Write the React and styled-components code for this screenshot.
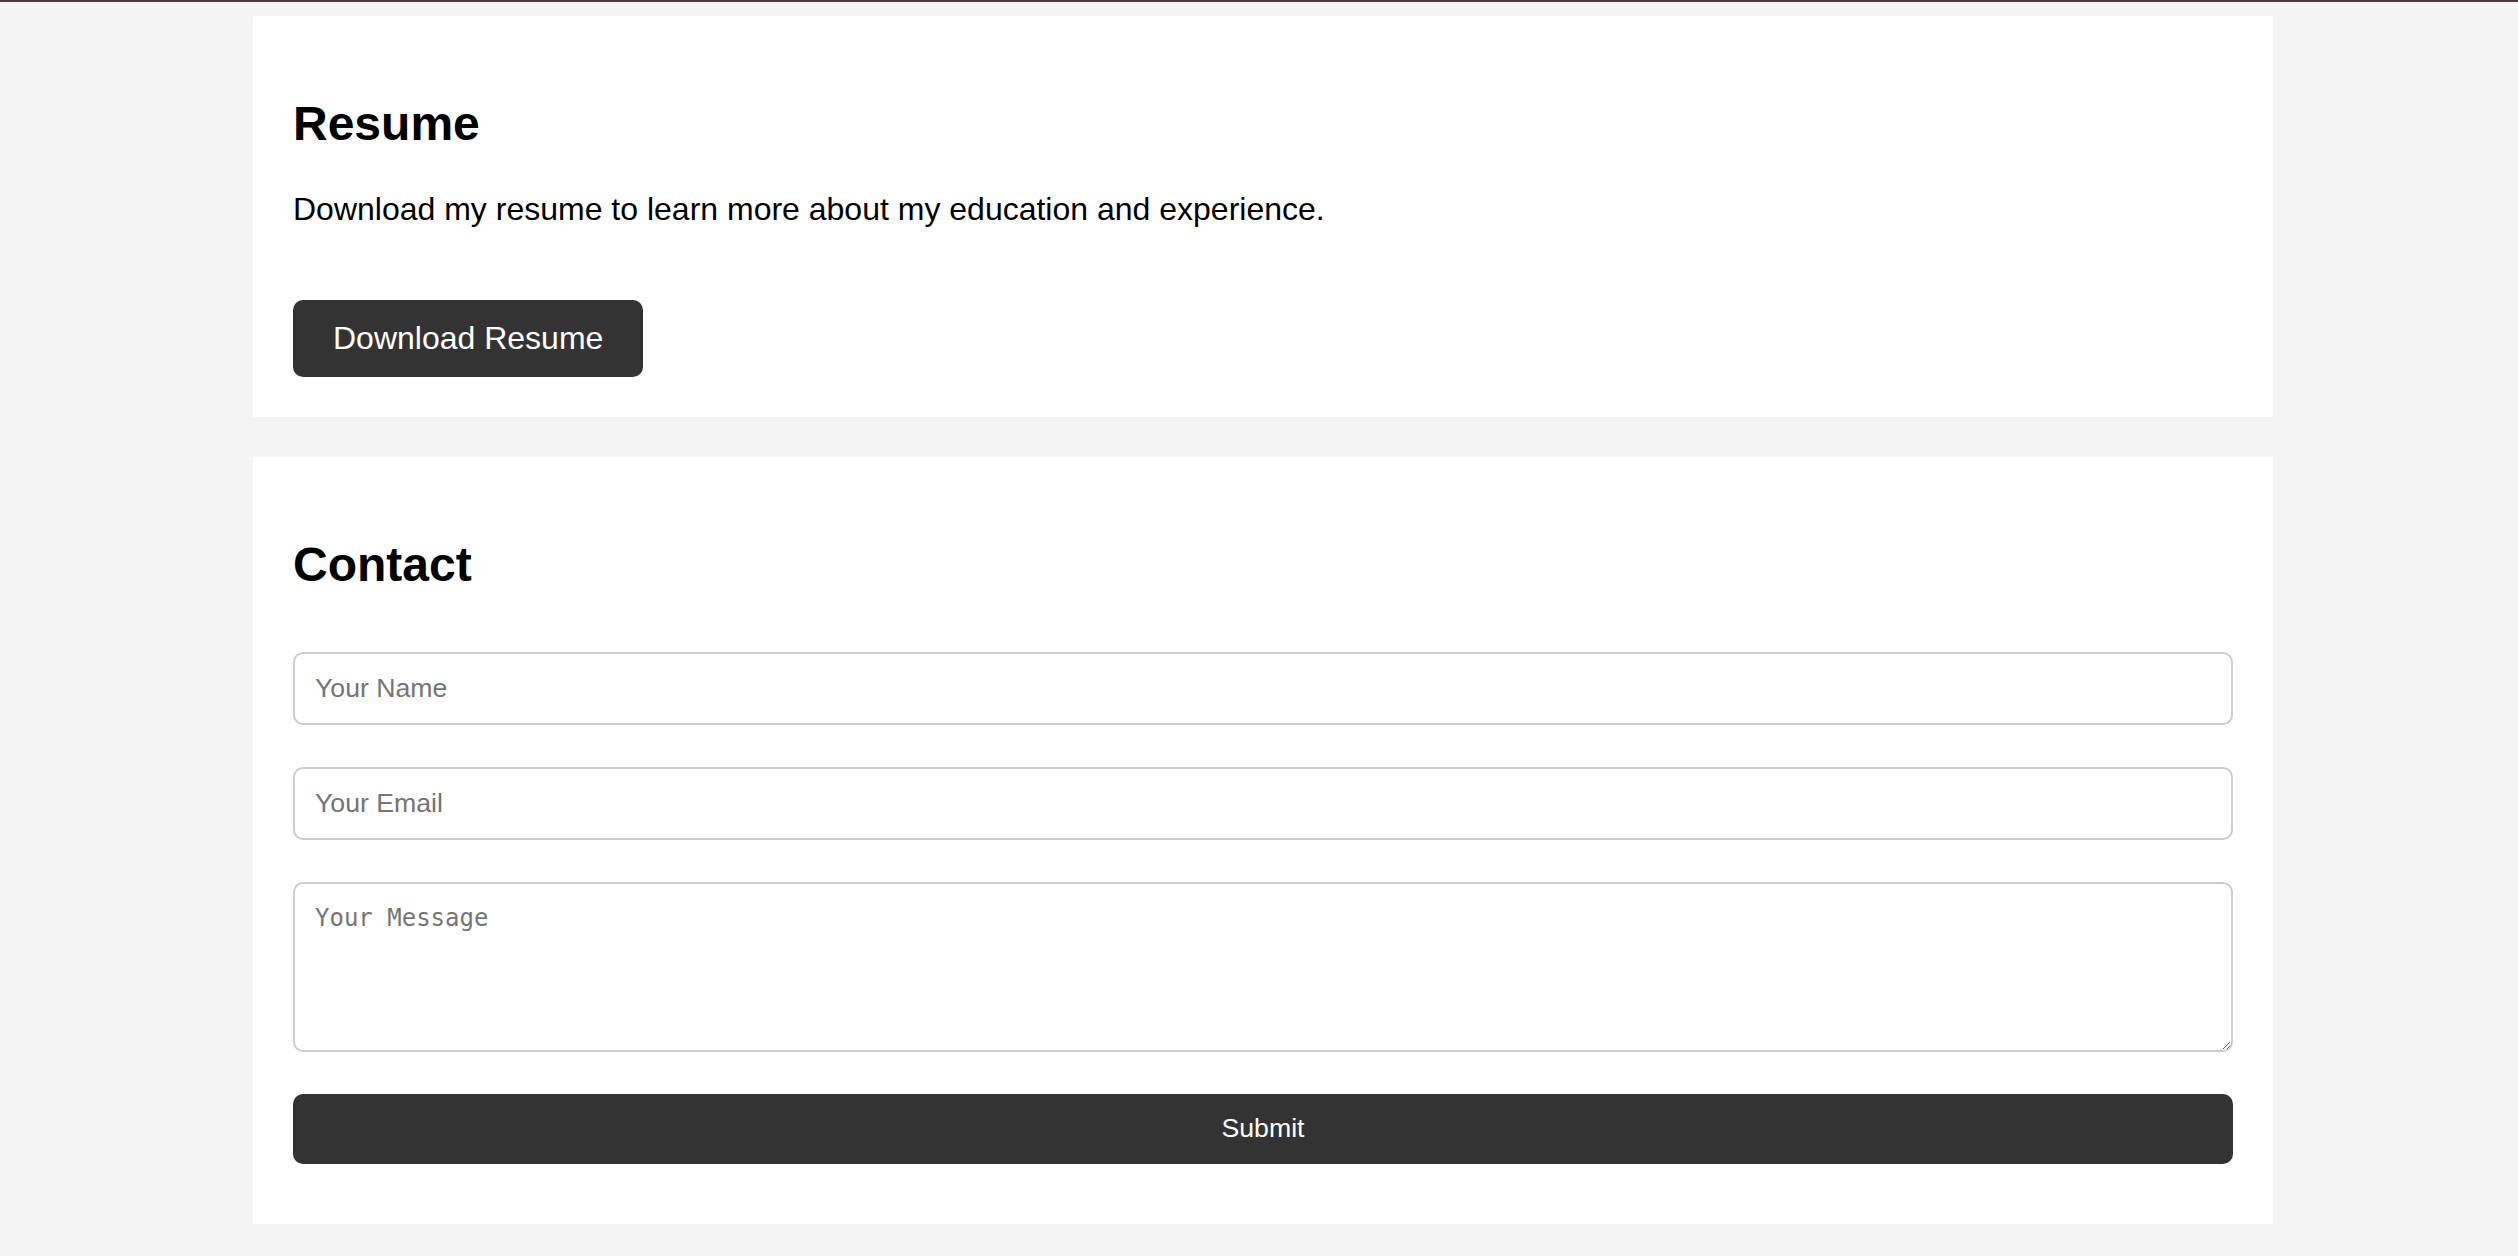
import React from 'react'
import styled, { createGlobalStyle } from 'styled-components'

const GlobalStyle = createGlobalStyle`
  html, body {
    margin: 0;
    padding: 0;
    background: #f4f4f4;
    font-family: "Liberation Sans", Arial, sans-serif;
    color: #000;
  }
`;

const HEADER_EDGE = styled.div`
  height: 2px;
  background: #493d43;
`;

const PAGE = styled.main`
  min-height: 1254px;
  padding: 14px 245px 0 253px;
  box-sizing: border-box;
`;

const SECTION = styled.section`
  width: 2020px;
  box-sizing: border-box;
  background: #fff;
  padding: 40px;
  margin-bottom: 40px;
  font-size: 32px;

  h2 {
    font-size: 48px;
    font-weight: bold;
    line-height: 1.15;
    margin: 40px 0;
  }
  p {
    margin: 0;
    line-height: 1.15;
  }
`;

const DownloadButton = styled.a`
  display: inline-block;
  margin-top: 72px;
  padding: 20px 40px;
  background: #333;
  color: #fff;
  font-size: 32px;
  line-height: 1.15;
  border-radius: 10px;
  text-decoration: none;
  cursor: pointer;
`;

const FORM = styled.form`
  display: flex;
  flex-direction: column;
  gap: 42px;
  padding: 20px 0;
`;

const Field = styled.input`
  box-sizing: border-box;
  width: 100%;
  height: 73px;
  padding: 0 20px;
  border: 2px solid #ccc;
  border-radius: 10px;
  font-family: "Liberation Sans", Arial, sans-serif;
  font-size: 26.67px;
  color: #000;
  outline: none;

  &::placeholder {
    color: #757575;
  }
`;

const MessageArea = styled.textarea`
  box-sizing: border-box;
  width: 100%;
  height: 170px;
  padding: 20px;
  border: 2px solid #ccc;
  border-radius: 10px;
  font-family: "DejaVu Sans Mono", "Liberation Mono", monospace;
  font-size: 24px;
  line-height: 1.2;
  outline: none;
  resize: vertical;

  &::placeholder {
    color: #757575;
  }
`;

const SubmitButton = styled.button`
  height: 70px;
  width: 100%;
  border: none;
  border-radius: 10px;
  background: #333;
  color: #fff;
  font-family: "Liberation Sans", Arial, sans-serif;
  font-size: 26.67px;
  cursor: pointer;
`;

export default function App() {
  return (
    <>
      <GlobalStyle />
      <HEADER_EDGE />
      <PAGE>
        <SECTION id="resume">
          <h2>Resume</h2>
          <p>Download my resume to learn more about my education and experience.</p>
          <DownloadButton href="#resume">Download Resume</DownloadButton>
        </SECTION>

        <SECTION id="contact">
          <h2>Contact</h2>
          <FORM onSubmit={(e) => e.preventDefault()}>
            <Field type="text" placeholder="Your Name" />
            <Field type="email" placeholder="Your Email" />
            <MessageArea placeholder="Your Message" />
            <SubmitButton type="submit">Submit</SubmitButton>
          </FORM>
        </SECTION>
      </PAGE>
    </>
  );
}
